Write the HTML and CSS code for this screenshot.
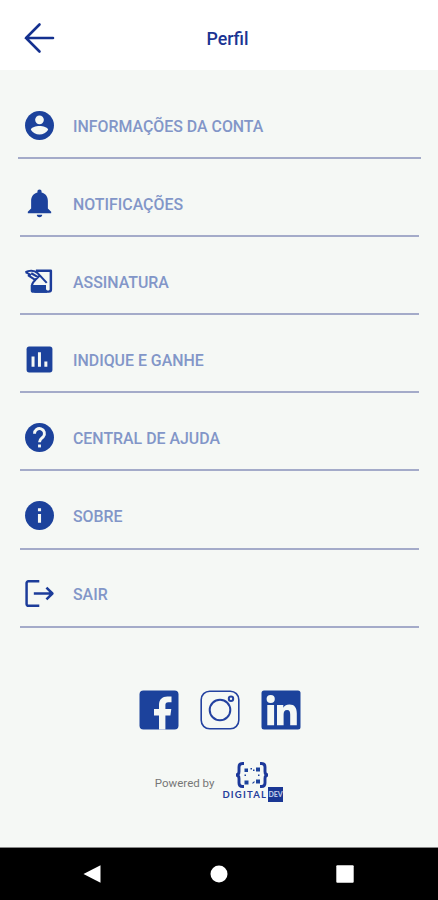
FILE: index.html
```html
<!DOCTYPE html>
<html lang="pt-BR">
<head>
    <meta charset="UTF-8">
    <title>Perfil</title>
    <link rel="stylesheet" href="styles.css">
</head>
<body>
    <header class="topbar">
        <svg class="back" viewBox="0 0 32 32"><path d="M30 16H3M16.500 2.500L3 16l13.500 13.500"/></svg>
        <h1>Perfil</h1>
    </header>

    <main>
        <ul class="menu">
            <li class="first">
                <svg class="icon" viewBox="0 0 30 30">
                    <circle cx="15" cy="15" r="14"/>
                    <circle class="light" cx="15" cy="9.500" r="4.200"/>
                    <path class="light" d="M6.600 19.200C7.300 16.700 11.400 15.600 15 15.600s7.700 1.100 8.400 3.600a10 10 0 0 1-16.800 0z"/>
                </svg>
                <span>INFORMAÇÕES DA CONTA</span>
            </li>
            <li>
                <svg class="icon" viewBox="0 0 30 30">
                    <path d="M15 1.500c1.300 0 2 .9 2 2v.9c4 .9 6.100 4.200 6.100 8.300v7.100l3.200 3.200v1.500H3.700V23l3.200-3.200v-7.100c0-4.100 2.100-7.400 6.100-8.300v-.9c0-1.100.7-2 2-2zM12.400 25.800h5.200a2.600 2.400 0 0 1-5.200 0z"/>
                </svg>
                <span>NOTIFICAÇÕES</span>
            </li>
            <li>
                <svg class="icon" viewBox="0 0 30 30">
                    <path class="line" d="M11.500 4.500H26v18.300c0 1.200-.9 2-2 2H10"/>
                    <path d="M6.500 18.300h14.800v4.200l1.500 2-.6 1.500H9a2.500 2.500 0 0 1-2.500-2.500z"/>
                    <path class="line thin" d="M1.500 6c3-2 8.500-2.200 11.500.8l2.500 2.500 6.500 7M1.500 6l4.500 2.400-1.500 1 6.300 4.100 4.200-4M7 7l7 4M7.800 18.500c0-2 1.200-3.200 3.200-5"/>
                </svg>
                <span>ASSINATURA</span>
            </li>
            <li>
                <svg class="icon" viewBox="0 0 30 30">
                    <rect x="2.500" y="2.500" width="25" height="25" rx="2.500"/>
                    <path class="light" d="M7.300 12.200h2.900v9.800H7.300zM13.500 8h2.900v14h-2.900zM19.700 17h2.900v5h-2.900z"/>
                </svg>
                <span>INDIQUE E GANHE</span>
            </li>
            <li>
                <svg class="icon" viewBox="0 0 30 30">
                    <circle cx="15" cy="15" r="14"/>
                    <path class="stroke-light" d="M10.200 11.300a4.800 4.800 0 1 1 8.500 2.900c-1.700 1.900-3.700 2.200-3.700 5.300"/>
                    <path class="light" d="M13.600 21.800h2.800v2.800h-2.800z"/>
                </svg>
                <span>CENTRAL DE AJUDA</span>
            </li>
            <li>
                <svg class="icon" viewBox="0 0 30 30">
                    <circle cx="15" cy="15" r="14"/>
                    <path class="light" d="M13.500 8h3v3h-3zM13.500 13.500h3v8.500h-3z"/>
                </svg>
                <span>SOBRE</span>
            </li>
            <li>
                <svg class="icon" viewBox="0 0 30 30">
                    <path class="line" d="M14.800 3.200H4.200a1.700 1.700 0 0 0-1.700 1.700v20.300a1.700 1.700 0 0 0 1.700 1.700h10.600M9.500 15h18M21.700 9.200l5.800 5.800-5.800 5.800"/>
                </svg>
                <span>SAIR</span>
            </li>
        </ul>

        <div class="social">
            <svg viewBox="0 0 40 40">
                <rect x=".5" y=".5" width="39" height="39" rx="4"/>
                <path class="light" d="M20 39.500V25.500h-5V19h5v-4.300c0-5.300 3.300-8.300 8.400-8.300h4.100v5.900h-3.200c-2.200 0-2.900 1.100-2.900 2.800V19h5.900l-.9 6.500h-5v14z"/>
            </svg>
            <svg viewBox="0 0 40 40">
                <rect class="outline" x="1.200" y="1.200" width="37.600" height="37.600" rx="8.500"/>
                <circle class="outline big" cx="20" cy="20" r="10.300"/>
                <circle class="outline big" cx="31" cy="8.800" r="2.200"/>
            </svg>
            <svg viewBox="0 0 40 40">
                <rect x=".5" y=".5" width="39" height="39" rx="2.500"/>
                <circle class="light" cx="9.700" cy="9" r="4.100"/>
                <path class="light" d="M6.300 15h6.800v20.300H6.300zM16 15h6.300v2.700c1.300-2.100 3.400-3.200 6-3.200 5.500 0 7.500 3.400 7.500 9v11.800h-6.600V24.700c0-2.800-.6-4.800-3.100-4.800-2.600 0-3.500 2-3.500 4.700v10.700H16z"/>
            </svg>
        </div>

        <div class="powered">
            <span>Powered by</span>
            <div class="brand">
                <svg class="braces" viewBox="0 0 36 26">
                    <path class="brace" d="M10 1.500H8.500Q5 1.500 5 5v4.500Q5 13 2 13q3 0 3 3.500V21Q5 24.500 8.500 24.500H10M26 1.500h1.500Q31 1.500 31 5v4.500q0 3.500 3 3.500-3 0-3 3.500V21q0 3.500-3.500 3.500H26"/>
                    <path d="M10.500 6.500h3.500V10h-3.500zM22 5.500h4v4h-4zM10.500 18.500h4v4h-4zM22 17.500h4v4h-4zM16.500 6H18v1.500h-1.500zM19 7.500h1.500V9H19zM10.500 12.500H12V14h-1.500zM24 12.500h1.500V14H24zM18.500 20.500l2-1.500v1.500l-2 1.500z"/>
                </svg>
                <div class="wordmark">DIGITAL<b>DEV</b></div>
            </div>
        </div>
    </main>

    <nav class="navbar">
        <svg viewBox="0 0 18 18"><path d="M.5 9L17.500.2v17.600z"/></svg>
        <svg viewBox="0 0 18 18"><circle cx="9" cy="9" r="8.500"/></svg>
        <svg viewBox="0 0 18 18"><rect x=".3" y=".3" width="17.400" height="17.400" rx="1"/></svg>
    </nav>
</body>
</html>
```
FILE: styles.css
```css
* {
    box-sizing: border-box;
}
body {
    margin: 0;
    height: 900px;
    display: flex;
    flex-direction: column;
    background-color: #f5f8f5;
    font-family: Roboto, sans-serif;
    overflow: hidden;
}
svg {
    display: block;
    flex-shrink: 0;
    fill: #1c429c;
}
.topbar {
    height: 70px;
    display: grid;
    grid-template-columns: 60px 1fr 60px;
    align-items: center;
    padding: 6px 0 0 0;
    background-color: #fff;
}
.back {
    width: 32px;
    height: 32px;
    margin-left: 23px;
    fill: none;
    stroke: #14308f;
    stroke-width: 2.6;
    stroke-linecap: round;
}
h1 {
    margin: 1px 0 0 17px;
    text-align: center;
    font-size: 17.8px;
    font-weight: 500;
    line-height: 20px;
    color: #1b3493;
}
main {
    flex: 1;
}
.menu {
    list-style: none;
    margin: 0;
    padding: 11px 19px 0 20px;
}
.menu li {
    height: 78.1px;
    display: flex;
    align-items: center;
    gap: 18px;
    padding: 12px 0 0 4px;
    border-bottom: 2px solid #a4abc9;
    color: #8296c8;
    font-size: 15.9px;
    font-weight: 500;
    line-height: 20px;
}
.menu span {
    padding-top: 3px;
}
.menu .first {
    margin: 0 -2px;
    padding-left: 6px;
}
.icon {
    width: 31px;
    height: 31px;
}
.light {
    fill: #f5f8f5;
}
.line {
    fill: none;
    stroke: #1c3c9a;
    stroke-width: 2.4;
    stroke-linejoin: round;
}
.thin {
    stroke-width: 2;
}
.stroke-light {
    fill: none;
    stroke: #f5f8f5;
    stroke-width: 2.8;
}
.social {
    display: flex;
    justify-content: center;
    gap: 21px;
    margin-top: 62.3px;
    padding-left: 1px;
}
.social svg {
    width: 40px;
    height: 40px;
}
.outline {
    fill: none;
    stroke: #2442a0;
    stroke-width: 1.6;
}
.big {
    stroke-width: 2;
}
.powered {
    display: flex;
    align-items: center;
    justify-content: center;
    gap: 8px;
    margin-top: 32px;
    color: #777;
    font-size: 11.5px;
}
.powered span {
    padding-top: 2px;
}
.brand {
    display: flex;
    flex-direction: column;
    align-items: center;
}
.braces {
    width: 36px;
    height: 26px;
    margin-right: 2px;
}
.brace {
    fill: none;
    stroke: #1c389a;
    stroke-width: 2.9;
}
.wordmark {
    display: flex;
    align-items: center;
    height: 15px;
    margin-top: -1px;
    color: #263e9b;
    font: 700 9.5px/15px Lato, sans-serif;
    letter-spacing: 1.2px;
}
.wordmark b {
    width: 15px;
    margin-left: 1px;
    background-color: #1a3794;
    color: #b9c5e6;
    font-size: 7px;
    letter-spacing: 0;
    text-align: center;
}
.navbar {
    height: 53px;
    display: flex;
    justify-content: space-between;
    align-items: center;
    padding: 0 84px 0 83px;
    border-top: 1px solid #888;
    background-color: #000;
}
.navbar svg {
    width: 18px;
    height: 18px;
    fill: #fff;
}
```
